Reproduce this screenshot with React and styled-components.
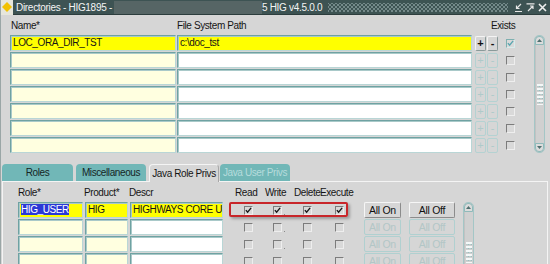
import React from "react";
import styled, { createGlobalStyle, css } from "styled-components";

const Global = createGlobalStyle`
  html, body { margin: 0; padding: 0; background: #d6d6d6; }
  * { box-sizing: border-box; }
`;

const Win = styled.div`
  width: 550px;
  height: 264px;
  overflow: hidden;
  background: #d6d6d6;
  font-family: "Liberation Sans", Arial, sans-serif;
  font-size: 10px;
  letter-spacing: -0.4px;
  color: #151515;
  border-left: 1px solid #9aa6a6;
`;

const TitleBar = styled.div`
  height: 15px;
  display: flex;
  align-items: center;
  background: #3d5353;
  color: #f4f4f4;
  border-bottom: 1px solid #2c3d3d;
`;

const AppIcon = styled.div`
  width: 12px;
  height: 15px;
  background: #e6e6dc;
  display: flex;
  align-items: center;
  justify-content: center;
  flex: none;
`;

const TitleText = styled.span`
  white-space: nowrap;
  font-size: 10px;
  letter-spacing: -0.3px;
  padding-left: ${(p) => p.$pl || 0}px;
`;

const Redacted = styled.span`
  width: 148px;
  height: 13px;
  background: #566565;
  flex: none;
  margin-left: 2px;
`;

const Dots = styled.div`
  flex: 1;
  height: 9px;
  margin: 0 6px 0 6px;
  background-image: radial-gradient(circle, #74898a 45%, transparent 50%),
    radial-gradient(circle, #74898a 45%, transparent 50%);
  background-size: 4px 4px;
  background-position: 0 0, 2px 2px;
`;

const WinBtns = styled.div`
  display: flex;
  gap: 3px;
  padding-right: 3px;
  align-items: center;
`;

const Upper = styled.div`
  display: flex;
  padding-left: 9px;
`;

const Table = styled.div`
  display: flex;
  flex-direction: column;
`;

const HeaderRow = styled.div`
  height: 20px;
  display: flex;
  align-items: center;
`;

const HeadLabel = styled.span`
  width: ${(p) => p.$w}px;
  padding-left: ${(p) => p.$pl || 0}px;
  white-space: nowrap;
  flex: none;
`;

const Row = styled.div`
  height: 16px;
  margin-bottom: 1px;
  display: flex;
  align-items: center;
`;

const Field = styled.div`
  width: ${(p) => p.$w}px;
  margin-left: ${(p) => p.$ml || 0}px;
  height: 16px;
  flex: none;
  overflow: hidden;
  white-space: nowrap;
  padding-left: 2px;
  line-height: 14px;
  border: 1px solid;
  border-color: #6fa2a2 #b9d6d6 #b9d6d6 #6fa2a2;
  box-shadow: inset 1px 1px 0 #a9c9c9;
  background: ${(p) =>
    p.$tone === "yellow" ? "#ffff00" : p.$tone === "cream" ? "#ffffe0" : "#ffffff"};
`;

const Selected = styled.span`
  background: #2b39d6;
  color: #ffffff;
`;

const SmallBtn = styled.div`
  width: 11px;
  height: 15px;
  margin-left: ${(p) => p.$ml || 0}px;
  flex: none;
  display: flex;
  align-items: center;
  justify-content: center;
  border: 1px solid;
  border-radius: 2px;
  font-size: 11px;
  letter-spacing: 0;
  ${(p) =>
    p.$on
      ? css`
          border-color: #f4f4f4 #8a9a9a #8a9a9a #f4f4f4;
          color: #111;
          font-weight: bold;
        `
      : css`
          border-color: #b4d2d2;
          color: #aecaca;
        `}
`;

const Check = styled.div`
  width: 9px;
  height: 9px;
  margin-left: ${(p) => p.$ml || 0}px;
  flex: none;
  position: relative;
  border: 1px solid;
  border-color: #7c7c7c #eeeeee #eeeeee #7c7c7c;
  background: #d9d9d9;
  display: flex;
  align-items: center;
  justify-content: center;
  ${(p) =>
    p.$teal &&
    css`
      border-color: #7fb0b0 #d8ecec #d8ecec #7fb0b0;
    `}
  ${(p) =>
    p.$dot &&
    css`
      &::after {
        content: "";
        position: absolute;
        right: -4px;
        bottom: -1px;
        width: 1px;
        height: 1px;
        background: #8a8a8a;
      }
    `}
`;

const Scroll = styled.div`
  width: 11px;
  height: ${(p) => p.$h}px;
  margin-left: ${(p) => p.$ml}px;
  margin-top: ${(p) => p.$mt || 0}px;
  flex: none;
  border: 1px solid #a4c6c6;
  border-radius: 5px;
  background: #d0d0d0;
  box-shadow: inset 1px 0 0 #c2c2c2;
  display: flex;
  flex-direction: column;
  justify-content: space-between;
  align-items: center;
`;

const ArrowBtn = styled.div`
  width: 9px;
  height: 9px;
  border-radius: ${(p) => (p.$down ? "1px 1px 5px 5px" : "5px 5px 1px 1px")};
  border: 1px solid #8fbaba;
  background: #dcdcdc;
  display: flex;
  align-items: center;
  justify-content: center;
`;

const Grip = styled.div`
  width: 6px;
  height: 22px;
  background-image: radial-gradient(circle, #f4f8f8 45%, transparent 55%),
    radial-gradient(circle, #9ac0c0 35%, transparent 50%);
  background-size: 3px 4px;
  background-position: 0 0, 1px 1px;
`;

const TabBar = styled.div`
  display: flex;
  align-items: flex-end;
  margin-top: 10px;
  padding-left: 1px;
  height: 17px;
`;

const Tab = styled.div`
  width: ${(p) => p.$w}px;
  margin-left: ${(p) => p.$ml || 0}px;
  height: 17px;
  border-radius: 4px 4px 0 0;
  display: flex;
  align-items: center;
  justify-content: center;
  white-space: nowrap;
  font-size: 10px;
  ${(p) =>
    p.$active
      ? css`
          background: #d6d6d6;
          border: 1px solid #f4f4f4;
          border-bottom: none;
          border-right-color: #a8a8a8;
          height: 18px;
          margin-bottom: -1px;
          position: relative;
          z-index: 1;
          color: #151515;
        `
      : css`
          background: #71b7b7;
          color: ${p.$disabled ? "#b6dcdc" : "#152525"};
        `}
`;

const Panel = styled.div`
  margin: 0 2px 0 1px;
  border-top: 1px solid #f4f4f4;
  border-left: 1px solid #f4f4f4;
  border-right: 1px solid #f4f4f4;
  display: flex;
  padding-left: 15px;
`;

const PanelTable = styled.div`
  display: flex;
  flex-direction: column;
  position: relative;
`;

const Highlight = styled.div`
  position: absolute;
  left: 211px;
  top: 20px;
  width: 119px;
  height: 15px;
  border: 2px solid #c8262a;
  border-radius: 2px;
  box-shadow: 2px 2px 3px rgba(0, 0, 0, 0.28);
`;

const PushBtn = styled.div`
  width: ${(p) => p.$w}px;
  margin-left: ${(p) => p.$ml}px;
  height: 16px;
  flex: none;
  border: 1px solid;
  border-radius: 2px;
  display: flex;
  align-items: center;
  justify-content: center;
  font-size: 10.5px;
  letter-spacing: -0.3px;
  ${(p) =>
    p.$on
      ? css`
          border-color: #f6f6f6 #8c8c8c #8c8c8c #f6f6f6;
          color: #111;
        `
      : css`
          border-color: #b0d0d0;
          color: #b2c6c6;
        `}
`;

const Tick = ({ color = "#1a1a1a" }) => (
  <svg width="8" height="7" viewBox="0 0 8 7">
    <path d="M1 3 L3 5.5 L7 0.5" fill="none" stroke={color} strokeWidth="1.6" />
  </svg>
);

const Up = ({ down }) => (
  <svg width="5" height="3" viewBox="0 0 5 3">
    <path d={down ? "M0 0 H5 L2.5 3 Z" : "M0 3 H5 L2.5 0 Z"} fill="#4f6f6f" />
  </svg>
);

const upperRows = [
  { name: "LOC_ORA_DIR_TST", path: "c:\\doc_tst", on: true },
  {}, {}, {}, {}, {}, {},
];

export default function App() {
  return (
    <>
      <Global />
      <Win>
        <TitleBar>
          <AppIcon>
            <svg width="10" height="10" viewBox="0 0 10 10">
              <path d="M5 0 L10 5 L5 10 L0 5 Z" fill="#f2c100" />
            </svg>
          </AppIcon>
          <TitleText $pl={3}>Directories - HIG1895 -</TitleText>
          <Redacted />
          <TitleText>5 HIG v4.5.0.0</TitleText>
          <Dots />
          <WinBtns>
            <svg width="9" height="9" viewBox="0 0 9 9">
              <path d="M1 8.5 H8 M7 1 L2.5 5.5 M2.5 2.5 V5.5 H5.5" fill="none" stroke="#e6e6e6" strokeWidth="1.2" />
            </svg>
            <svg width="9" height="9" viewBox="0 0 9 9">
              <path d="M0.5 0.8 H8.5 M2 8 L7 3 M4 3 H7 V6" fill="none" stroke="#e6e6e6" strokeWidth="1.2" />
            </svg>
            <svg width="9" height="9" viewBox="0 0 9 9">
              <path d="M1 1 L8 8 M8 1 L1 8" fill="none" stroke="#f0f0f0" strokeWidth="1.6" />
            </svg>
          </WinBtns>
        </TitleBar>

        <Upper>
          <Table>
            <HeaderRow>
              <HeadLabel $w={167} $pl={1}>Name*</HeadLabel>
              <HeadLabel $w={314}>File System Path</HeadLabel>
              <HeadLabel $w={30}>Exists</HeadLabel>
            </HeaderRow>
            {upperRows.map((r, i) => (
              <Row key={i}>
                <Field $w={166} $tone={r.on ? "yellow" : "cream"}>{r.name}</Field>
                <Field $w={295} $ml={1} $tone={r.on ? "yellow" : "white"}>{r.path}</Field>
                <SmallBtn $ml={3} $on={r.on}>+</SmallBtn>
                <SmallBtn $ml={1} $on={r.on}>-</SmallBtn>
                <Check $ml={8} $teal={r.on}>{r.on && <Tick color="#5aa6b0" />}</Check>
              </Row>
            ))}
          </Table>
          <Scroll $h={118} $ml={13} $mt={20}>
            <ArrowBtn><Up /></ArrowBtn>
            <Grip />
            <ArrowBtn $down><Up down /></ArrowBtn>
          </Scroll>
        </Upper>

        <TabBar>
          <Tab $w={71}>Roles</Tab>
          <Tab $w={70} $ml={3}>Miscellaneous</Tab>
          <Tab $w={70} $ml={3} $active>Java Role Privs</Tab>
          <Tab $w={70} $ml={1} $disabled>Java User Privs</Tab>
        </TabBar>

        <Panel>
          <PanelTable>
            <HeaderRow>
              <HeadLabel $w={66}>Role*</HeadLabel>
              <HeadLabel $w={45}>Product*</HeadLabel>
              <HeadLabel $w={106}>Descr</HeadLabel>
              <HeadLabel $w={30}>Read</HeadLabel>
              <HeadLabel $w={29}>Write</HeadLabel>
              <HeadLabel $w={26}>Delete</HeadLabel>
              <HeadLabel $w={40}>Execute</HeadLabel>
            </HeaderRow>
            {[0, 1, 2, 3].map((i) => {
              const on = i === 0;
              return (
                <Row key={i}>
                  <Field $w={65} $tone={on ? "yellow" : "cream"}>
                    {on && <Selected>HIG_USER</Selected>}
                  </Field>
                  <Field $w={43} $ml={2} $tone={on ? "yellow" : "cream"}>{on && "HIG"}</Field>
                  <Field $w={93} $ml={2} $tone={on ? "yellow" : "white"}>{on && "HIGHWAYS CORE UPDATE"}</Field>
                  <Check $ml={21}>{on && <Tick />}</Check>
                  <Check $ml={20} $dot>{on && <Tick />}</Check>
                  <Check $ml={21}>{on && <Tick />}</Check>
                  <Check $ml={23}>{on && <Tick />}</Check>
                  <PushBtn $w={37} $ml={20} $on={on}>All On</PushBtn>
                  <PushBtn $w={46} $ml={8} $on={on}>All Off</PushBtn>
                </Row>
              );
            })}
            <Highlight />
          </PanelTable>
          <Scroll $h={100} $ml={8} $mt={20}>
            <ArrowBtn><Up /></ArrowBtn>
            <Grip />
            <ArrowBtn $down><Up down /></ArrowBtn>
          </Scroll>
        </Panel>
      </Win>
    </>
  );
}
